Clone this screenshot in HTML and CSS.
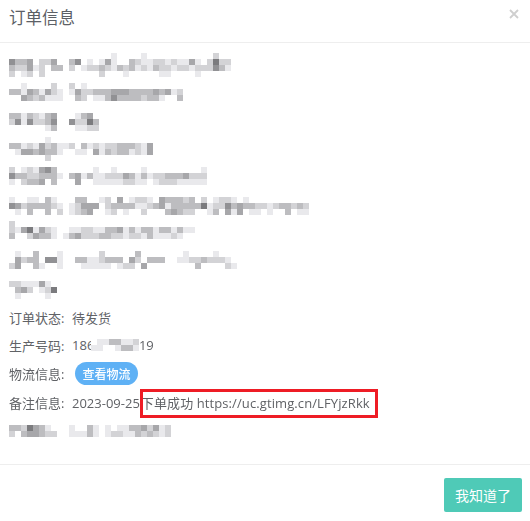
FILE: index.html
```html
<!DOCTYPE html>
<html lang="zh-CN">
<head>
  <meta charset="UTF-8">
  <meta name="viewport" content="width=device-width, initial-scale=1">
  <title>订单信息</title>

  <link rel="stylesheet" href="styles.css">
</head>

<body>

  <div class="dialog">
    <div class="dialog-header">
      <span class="dialog-title">订单信息</span>
      <svg class="dialog-close" viewBox="0 0 10 10" width="10" height="10">
        <path d="M1 1L9 9M9 1L1 9" stroke="#cfcfcf" stroke-width="1.8" fill="none"/>
      </svg>
    </div>

    <div class="dialog-body">
      <canvas class="mosaic mosaic-top" id="mosaicTop" width="300" height="246"></canvas>

      <div class="info-row">
        <span class="info-label">订单状态:</span>
        <span>待发货</span>
      </div>
      <div class="info-row">
        <span class="info-label">生产号码:</span>
        <span>18</span><span class="cut-digit">6</span>
        <canvas class="mosaic" id="mosaicCode" width="48" height="12"></canvas>
        <span>19</span>
      </div>
      <div class="info-row info-row-tall">
        <span class="info-label">物流信息:</span>
        <a class="tag-button">查看物流</a>
      </div>
      <div class="info-row info-row-tall">
        <span class="info-label">备注信息:</span>
        <span>2023-09-25</span>
        <span class="marked">下单成功 https://uc.gtimg.cn/LFYjzRkk</span>
      </div>
      <div class="info-row">
        <canvas class="mosaic" id="mosaicLast" width="162" height="12"></canvas>
      </div>
    </div>

    <div class="dialog-footer">
      <button class="ok-button">我知道了</button>
    </div>
  </div>

  <script src="script.js"></script>

</body>
</html>
```

FILE: styles.css
```css
* {
  box-sizing: border-box;
}

body {
  font-family: "Open Sans", "Noto Sans CJK SC", sans-serif;
  font-size: 13px;
  margin: 0;
  padding: 0;
  background: #fff;
  color: #606266;
  height: 100vh;
  overflow: hidden;
}

.dialog {
  height: 100%;
  display: flex;
  flex-direction: column;
}

.dialog-header {
  height: 43px;
  padding: 0 11px 8px 9px;
  border-bottom: 1px solid #eeeeee;
  display: flex;
  justify-content: space-between;
  align-items: center;
}

.dialog-title {
  font-size: 16.5px;
  color: #5c6066;
}

.dialog-close {
  margin-top: -6px;
}

.dialog-body {
  flex: 1;
  padding: 8px 9px 0;
}

.mosaic {
  display: block;
}

.mosaic-top {
  margin: 2px 0 4px;
}

.info-row {
  height: 28px;
  display: flex;
  align-items: center;
}

.info-row-tall {
  height: 29px;
}

.info-label {
  width: 63px;
  flex: none;
}

.cut-digit {
  width: 4px;
  overflow: hidden;
}

.tag-button {
  height: 23px;
  padding: 0 7.5px;
  margin-left: 3px;
  background: #5fb1f5;
  border-radius: 12px;
  color: #fff;
  font-size: 12px;
  font-weight: 500;
  display: flex;
  align-items: center;
}

.marked {
  position: relative;
  margin-left: 1px;
  letter-spacing: 0.1px;
}

.marked::after {
  content: "";
  position: absolute;
  left: -1px;
  right: -8px;
  top: -4px;
  bottom: -6px;
  border: 3px solid #ee1c25;
}

.dialog-footer {
  height: 57px;
  padding: 13px 8px 0;
  border-top: 1px solid #eeeeee;
  display: flex;
  justify-content: flex-end;
}

.ok-button {
  width: 78px;
  height: 34px;
  border: none;
  border-radius: 2px;
  background: #4fcab7;
  color: #fff;
  font-family: inherit;
  font-size: 14px;
}
```

FILE: script.js
```js
// pixelated parts of the screenshot, one string per 6px line, digit = how dark the cell is
const mosaics = {
  mosaicTop: [
    "0000000000000000010000100000000000200",
    "5334022400350101410032112212114102622",
    "3224120330201223213231213221221222531",
    "2012020000000002000100000110000100",
    "",
    "00100002002010",
    "33143142101422333444333343412",
    "00432311100320113533332331003",
    "",
    "",
    "331321340001340",
    "251522350052263",
    "000000130001122",
    "",
    "0000001",
    "331214231120312122333214",
    "014434331001104132331214",
    "0000002",
    "",
    "201214530000001001000010000000001",
    "533223331034131122243131223334222",
    "102334030004001111122110122211111",
    "",
    "",
    "10011031000330012040122104333230201221010",
    "54233332101244402333311234133333612253433221233232",
    "01030030201234001201002000343220013041401101003011",
    "",
    "200000000000000000",
    "2146142100112211334131331331311",
    "3002433101342223322122131112100",
    "",
    "",
    "01003000100000020000030000000100001",
    "04233055100331123330420333001122322210",
    "24003100100011111012204000000003000021",
    "",
    "",
    "221114100",
    "034201260",
    "010000100"
  ],
  mosaicCode: [
    "01133112",
    "11001331"
  ],
  mosaicLast: [
    "332643100010031010113342412",
    "203443220011131012211323212"
  ]
};

function drawMosaic(id, lines) {
  const canvas = document.getElementById(id);
  const ctx = canvas.getContext("2d");

  lines.forEach(function (line, y) {
    for (let x = 0; x < line.length; x++) {
      let level = Number(line[x]);
      if (level === 0) continue;
      let grey = 255 - level * 22;
      ctx.fillStyle = "rgb(" + grey + "," + grey + "," + (grey + 3) + ")";
      ctx.fillRect(x * 6, y * 6, 6, 6);
    }
  });
}

for (let id in mosaics) {
  drawMosaic(id, mosaics[id]);
}
```
